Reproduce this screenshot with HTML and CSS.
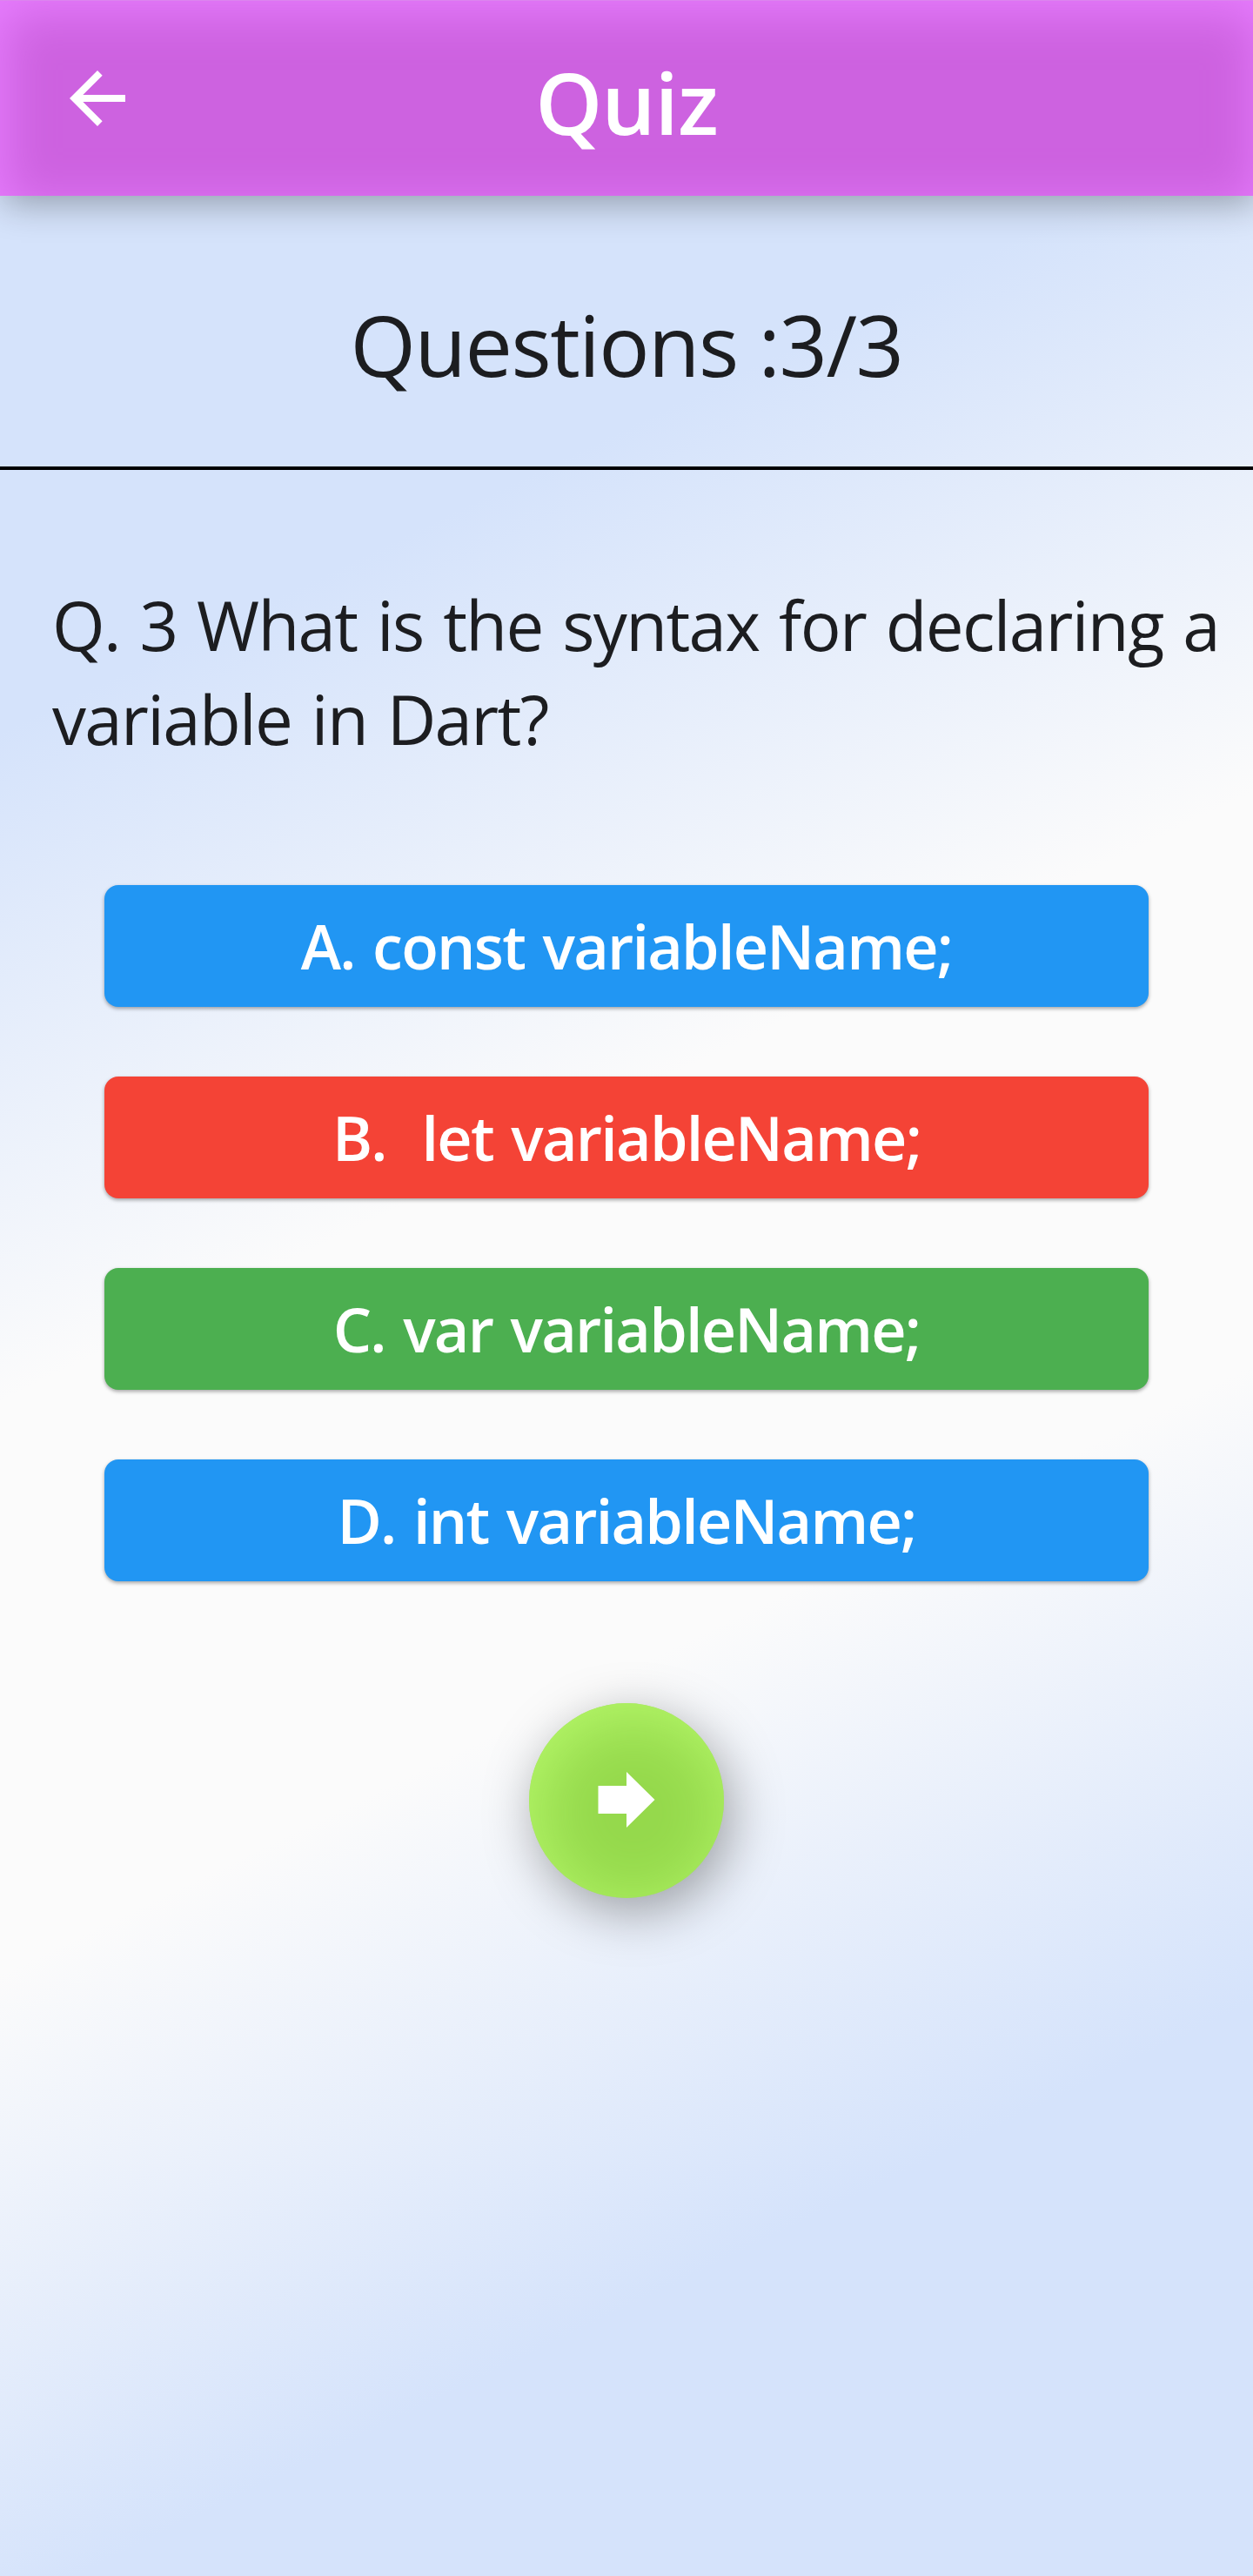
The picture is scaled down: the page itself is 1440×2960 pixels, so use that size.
FILE: index.html
```html
<!DOCTYPE html>
<html lang="en">
<head>
<meta charset="utf-8">
<title>Quiz</title>
<link rel="stylesheet" href="styles.css">
</head>
<body>
<div class="screen">
  <header class="app-bar">
    <button class="back" aria-label="Back">
      <svg viewBox="0 0 24 24" width="96" height="96"><path fill="#fff" d="M20 11H7.83l5.59-5.59L12 4l-8 8 8 8 1.41-1.41L7.83 13H20v-2z"/></svg>
    </button>
    <h1 class="title">Quiz</h1>
  </header>
  <div class="progress">Questions :3/3</div>
  <main class="content">
    <p class="question">Q. 3 What is the syntax for declaring a<br>variable in Dart?</p>
    <div class="answers">
      <button class="answer">A. const variableName;</button>
      <button class="answer wrong">B.  let variableName;</button>
      <button class="answer correct">C. var variableName;</button>
      <button class="answer">D. int variableName;</button>
    </div>
    <button class="next" aria-label="Next">
      <svg viewBox="0 0 66 64" width="66" height="64"><path fill="#fff" d="M0.5 16H33V0l32.5 32L33 64V48H0.5z"/></svg>
    </button>
  </main>
</div>
</body>
</html>
```
FILE: styles.css
```css
* {
  box-sizing: border-box;
}

body {
  margin: 0;
  font-family: "Open Sans", "Noto Sans", sans-serif;
  color: #1c1d20;
}

button {
  border: 0;
  padding: 0;
  font: inherit;
  color: #fff;
}

svg {
  display: block;
}

.screen {
  height: 2960px;
  overflow: hidden;
  display: flex;
  flex-direction: column;
  background: linear-gradient(154.06deg, #d5e3fb 23%, #fbfbfb 44%, #fbfbfb 62%, #d5e3fb 82%);
}

.app-bar {
  flex: none;
  height: 225px;
  display: grid;
  grid-template-columns: 160px 1fr 160px;
  align-items: center;
  border-top: 1px solid #dc85ee;
  background: #cd62e0;
  box-shadow: 4px 8px 40px rgba(0, 0, 0, 0.32), inset 5px 12px 56px #e87eff;
}

.back {
  justify-self: end;
  background: none;
}

.title {
  margin: 0;
  padding-top: 7px;
  text-align: center;
  color: #fff;
  font-size: 98px;
  font-weight: 600;
  letter-spacing: -1px;
}

.progress {
  flex: none;
  height: 315px;
  padding-top: 28px;
  display: flex;
  align-items: center;
  justify-content: center;
  border-bottom: 4px solid #000;
  font-size: 97px;
  letter-spacing: -1.5px;
}

.content {
  display: flex;
  flex-direction: column;
  padding-top: 124px;
}

.question {
  margin: 0;
  padding-left: 60px;
  white-space: nowrap;
  font-size: 78px;
  line-height: 108px;
  letter-spacing: -1.65px;
  word-spacing: 4px;
}

.answers {
  display: flex;
  flex-direction: column;
  gap: 80px;
  padding: 137px 120px 0;
}

.answer {
  height: 140px;
  border-radius: 16px;
  background: #2196f3;
  box-shadow: 0 2px 4px rgba(0, 0, 0, 0.35);
  white-space: pre;
  font-size: 70px;
  font-weight: 600;
  line-height: 140px;
  letter-spacing: -1.75px;
  word-spacing: 4px;
}

.wrong {
  background: #f44336;
}

.correct {
  background: #4caf50;
}

.next {
  align-self: center;
  width: 224px;
  height: 224px;
  margin-top: 140px;
  display: grid;
  place-items: center;
  padding-bottom: 2px;
  border-radius: 50%;
  background: #95d94c;
  box-shadow: 8px 16px 60px rgba(0, 0, 0, 0.35), inset 8px 14px 76px #b6f86a;
}
```
